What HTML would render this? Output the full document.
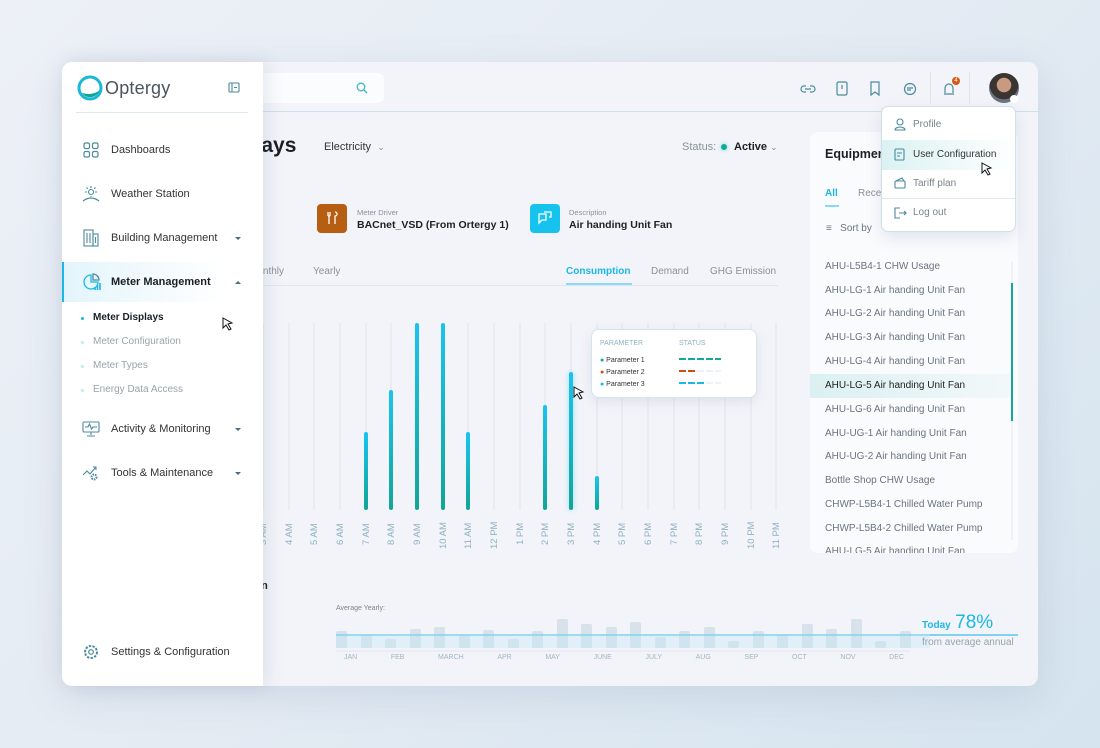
<!DOCTYPE html>
<html><head><meta charset="utf-8"><style>
*{box-sizing:border-box;margin:0;padding:0}
body{width:1100px;height:748px;overflow:hidden;background:linear-gradient(135deg,#edf1f7 0%,#e4ebf3 50%,#d5e4ef 100%);font-family:"Liberation Sans",sans-serif;position:relative;color:#222}
.abs{position:absolute}
.card{left:62px;top:62px;width:976px;height:624px;border-radius:10px;background:#f3f4f9;overflow:hidden;box-shadow:0 10px 40px rgba(80,110,150,.15)}
.side{left:62px;top:62px;width:201px;height:624px;background:#fff;border-radius:10px 0 0 10px;box-shadow:4px 0 18px rgba(60,80,120,.12);z-index:5}
.nav{position:absolute;left:0;width:201px;height:40px;display:flex;align-items:center;font-size:11px;color:#333}
.nav .t{position:absolute;left:49px}
.nav .car{position:absolute;left:173px;width:0;height:0;border-left:3px solid transparent;border-right:3px solid transparent;border-top:3px solid #4a6a80}
.sub{position:absolute;left:31px;font-size:10px;color:#9aa3ad}
.sub:before{content:"";position:absolute;left:-12px;top:5px;width:3px;height:3px;border-radius:50%;background:#bfe9f7}
.xl{position:absolute;font-size:9.5px;color:#8fb2c2;transform:rotate(-90deg);transform-origin:left top;white-space:nowrap}
.li{position:absolute;left:825px;font-size:10px;color:#6b7480}
.bar{position:absolute;width:4px;border-radius:2px;background:linear-gradient(180deg,#18c4f0,#12a596)}
</style></head><body>
<div class="abs card"></div>
<!-- header -->
<div class="abs" style="left:263px;top:62px;width:775px;height:50px;border-bottom:1px solid #cfe0ea"></div>
<div class="abs" style="left:200px;top:73px;width:184px;height:30px;background:#fbfcfe;border-radius:6px"></div>
<svg class="abs" style="left:356px;top:82px" width="12" height="12" viewBox="0 0 12 12"><circle cx="5" cy="5" r="3.8" fill="none" stroke="#39b8c9" stroke-width="1.3"/><path d="M8 8l3 3" stroke="#39b8c9" stroke-width="1.3"/></svg>
<svg class="abs" style="left:800px;top:80px" width="160" height="18" viewBox="0 0 160 18" fill="none" stroke="#4a8a9c" stroke-width="1.2">
<path d="M6 6h-2a3 3 0 0 0 0 6h2M10 6h2a3 3 0 0 1 0 6h-2M5 9h6"/>
<rect x="37" y="2" width="10" height="13" rx="1.5"/><path d="M42 5v4"/>
<path d="M71 2h8v13l-4-3-4 3z"/>
<circle cx="110" cy="9" r="5.5"/><path d="M107 8h6M107 10h4"/>
<path d="M144 14h10M145 13v-5a4 4 0 0 1 8 0v5"/>
</svg>
<div class="abs" style="left:930px;top:72px;width:1px;height:32px;background:#dde6ee"></div>
<div class="abs" style="left:969px;top:72px;width:1px;height:32px;background:#dde6ee"></div>
<div class="abs" style="left:952px;top:77px;width:8px;height:8px;border-radius:50%;background:#d35a10;font-size:6px;color:#fff;text-align:center;line-height:8px">4</div>
<div class="abs" style="left:989px;top:73px;width:30px;height:30px;border-radius:50%;background:radial-gradient(circle at 50% 40%,#c99a82 0 30%,#3a3530 32% 60%,#6a7580 62%)"></div>
<div class="abs" style="left:1010px;top:95px;width:8px;height:8px;border-radius:50%;background:#fff"></div>

<!-- title row -->
<div class="abs" style="left:210px;top:134px;font-size:21px;font-weight:bold;color:#1b1f24">Displays</div>
<div class="abs" style="left:324px;top:141px;font-size:11px;color:#333">Electricity &nbsp;<span style="color:#888;font-size:9px">⌄</span></div>
<div class="abs" style="left:682px;top:141px;font-size:11px;color:#8a9199">Status:</div>
<div class="abs" style="left:721px;top:144px;width:6px;height:6px;border-radius:50%;background:#14a89a;box-shadow:0 0 5px #6ddbd0"></div>
<div class="abs" style="left:734px;top:141px;font-size:11px;font-weight:bold;color:#1b1f24">Active <span style="color:#888;font-weight:normal;font-size:9px">⌄</span></div>

<!-- info row -->
<div class="abs" style="left:210px;top:218px;font-size:11px;font-weight:bold">10:22 PM</div>
<div class="abs" style="left:317px;top:204px;width:30px;height:29px;border-radius:4px;background:#b65f12"></div>
<svg class="abs" style="left:325px;top:211px" width="14" height="14" viewBox="0 0 14 14" fill="none" stroke="#fff" stroke-width="1.3"><path d="M3 1v4M5 1v4M3 5h2M4 5v8M10 1a2 2 0 0 1 0 4v8"/></svg>
<div class="abs" style="left:357px;top:208px;font-size:7.5px;color:#8a9199">Meter Driver</div>
<div class="abs" style="left:357px;top:219px;font-size:10.5px;font-weight:bold">BACnet_VSD (From Ortergy 1)</div>
<div class="abs" style="left:530px;top:204px;width:30px;height:29px;border-radius:4px;background:#16c2ee"></div>
<svg class="abs" style="left:537px;top:211px" width="16" height="14" viewBox="0 0 16 14" fill="none" stroke="#fff" stroke-width="1.3"><path d="M2 3h7v6H5l-3 3zM7 1h7v5h-2"/></svg>
<div class="abs" style="left:569px;top:208px;font-size:7.5px;color:#8a9199">Description</div>
<div class="abs" style="left:569px;top:219px;font-size:10.5px;font-weight:bold">Air handing Unit Fan</div>

<!-- tabs -->
<div class="abs" style="left:200px;top:266px;width:578px;height:20px;border-bottom:1px solid #dfe8f0"></div>
<div class="abs" style="left:249px;top:266px;font-size:10px;color:#8a9199">Monthly</div>
<div class="abs" style="left:313px;top:266px;font-size:10px;color:#8a9199">Yearly</div>
<div class="abs" style="left:566px;top:266px;font-size:10px;font-weight:bold;color:#1bb8e6">Consumption</div>
<div class="abs" style="left:566px;top:283px;width:66px;height:2px;background:#8dd9f2"></div>
<div class="abs" style="left:651px;top:266px;font-size:10px;color:#8a9199">Demand</div>
<div class="abs" style="left:710px;top:266px;font-size:10px;color:#8a9199">GHG Emission</div>

<!-- chart -->
<svg class="abs" style="left:250px;top:320px" width="540" height="195" viewBox="250 320 540 195">
<g stroke="#dfe5ee" stroke-width="1">
<path d="M263 323V510M289 323V510M314 323V510M340 323V510M366 323V510M391 323V510M417 323V510M443 323V510M468 323V510M494 323V510M520 323V510M545 323V510M571 323V510M597 323V510M622 323V510M648 323V510M674 323V510M699 323V510M725 323V510M751 323V510M776 323V510"/>
</g>
</svg>
<div class="bar" style="left:364px;top:432px;height:78px"></div>
<div class="bar" style="left:389px;top:390px;height:120px"></div>
<div class="bar" style="left:415px;top:323px;height:187px"></div>
<div class="bar" style="left:441px;top:323px;height:187px"></div>
<div class="bar" style="left:466px;top:432px;height:78px"></div>
<div class="bar" style="left:543px;top:405px;height:105px"></div>
<div class="bar" style="left:569px;top:372px;height:138px;box-shadow:0 0 6px #8fdcf6"></div>
<div class="bar" style="left:595px;top:476px;height:34px"></div>
<div class="xl" style="left:258px;top:545px">3 AM</div><div class="xl" style="left:284px;top:545px">4 AM</div><div class="xl" style="left:309px;top:545px">5 AM</div><div class="xl" style="left:335px;top:545px">6 AM</div><div class="xl" style="left:361px;top:545px">7 AM</div><div class="xl" style="left:386px;top:545px">8 AM</div><div class="xl" style="left:412px;top:545px">9 AM</div><div class="xl" style="left:438px;top:549px">10 AM</div><div class="xl" style="left:463px;top:549px">11 AM</div><div class="xl" style="left:489px;top:549px">12 PM</div><div class="xl" style="left:515px;top:545px">1 PM</div><div class="xl" style="left:540px;top:545px">2 PM</div><div class="xl" style="left:566px;top:545px">3 PM</div><div class="xl" style="left:592px;top:545px">4 PM</div><div class="xl" style="left:617px;top:545px">5 PM</div><div class="xl" style="left:643px;top:545px">6 PM</div><div class="xl" style="left:669px;top:545px">7 PM</div><div class="xl" style="left:694px;top:545px">8 PM</div><div class="xl" style="left:720px;top:545px">9 PM</div><div class="xl" style="left:746px;top:549px">10 PM</div><div class="xl" style="left:771px;top:549px">11 PM</div>

<!-- tooltip -->
<div class="abs" style="left:591px;top:329px;width:166px;height:69px;background:#fff;border:1px solid #d6e3ec;border-radius:8px;box-shadow:0 4px 12px rgba(80,110,150,.12)"></div>
<div class="abs" style="left:600px;top:340px;font-size:7px;color:#8fb2c2">PARAMETER</div>
<div class="abs" style="left:679px;top:340px;font-size:7px;color:#8fb2c2">STATUS</div>
<div class="abs" style="left:600px;top:355px;font-size:7px;color:#333;line-height:12px"><span style="color:#14a89a">●</span> Parameter 1<br><span style="color:#c9500f">●</span> Parameter 2<br><span style="color:#1bb8e6">●</span> Parameter 3</div>
<svg class="abs" style="left:679px;top:356px" width="42" height="30"><g stroke-width="2" stroke-dasharray="7 2"><path d="M0 3h42" stroke="#14a89a"/><path d="M0 15h42" stroke="#eef1f6"/><path d="M0 15h16" stroke="#c9500f"/><path d="M0 27h42" stroke="#eef1f6"/><path d="M0 27h25" stroke="#1bb8e6"/></g></svg>
<svg class="abs" style="left:573px;top:386px" width="12" height="14" viewBox="0 0 12 14"><path d="M1 1l9 5-4 1 3 5-2 1-3-5-3 3z" fill="#fff" stroke="#111" stroke-width="1"/></svg>

<!-- equipment panel -->
<div class="abs" style="left:810px;top:132px;width:208px;height:421px;background:#fafbfd;border-radius:8px"></div>
<div class="abs" style="left:825px;top:147px;font-size:12.5px;font-weight:bold;color:#1b1f24">Equipment</div>
<div class="abs" style="left:825px;top:188px;font-size:10px;font-weight:bold;color:#1bb8e6">All</div>
<div class="abs" style="left:858px;top:188px;font-size:10px;color:#8a9199">Recent</div>
<div class="abs" style="left:825px;top:205px;width:14px;height:2px;background:#8dd9f2"></div>
<div class="abs" style="left:826px;top:223px;font-size:10px;color:#6b7480">≡ &nbsp; Sort by</div>
<div class="abs" style="left:810px;top:374px;width:200px;height:24px;background:linear-gradient(90deg,#dbf0f2,#f2f8fa)"></div>
<div class="abs" style="left:1011px;top:262px;width:2px;height:278px;background:#eef1f6"></div>
<div class="abs" style="left:1011px;top:283px;width:2px;height:138px;background:#14a89a"></div>
<div class="li" style="top:261px">AHU-L5B4-1 CHW Usage</div>
<div class="li" style="top:285px">AHU-LG-1 Air handing Unit Fan</div>
<div class="li" style="top:308px">AHU-LG-2 Air handing Unit Fan</div>
<div class="li" style="top:332px">AHU-LG-3 Air handing Unit Fan</div>
<div class="li" style="top:356px">AHU-LG-4 Air handing Unit Fan</div>
<div class="li" style="top:380px;color:#222">AHU-LG-5 Air handing Unit Fan</div>
<div class="li" style="top:404px">AHU-LG-6 Air handing Unit Fan</div>
<div class="li" style="top:428px">AHU-UG-1 Air handing Unit Fan</div>
<div class="li" style="top:451px">AHU-UG-2 Air handing Unit Fan</div>
<div class="li" style="top:475px">Bottle Shop CHW Usage</div>
<div class="li" style="top:499px">CHWP-L5B4-1 Chilled Water Pump</div>
<div class="li" style="top:523px">CHWP-L5B4-2 Chilled Water Pump</div>
<div class="abs" style="left:810px;top:546px;width:208px;height:7px;overflow:hidden"><div class="li" style="left:15px;top:0">AHU-LG-5 Air handing Unit Fan</div></div>

<!-- dropdown -->
<div class="abs" style="left:881px;top:106px;width:135px;height:126px;background:#fff;border:1px solid #cfe0ea;border-radius:7px;box-shadow:0 6px 16px rgba(80,110,150,.15);overflow:hidden;z-index:3">
<div class="abs" style="left:0;top:33px;width:135px;height:30px;background:linear-gradient(90deg,#dbf2f2,#fff)"></div>
<div class="abs" style="left:0;top:91px;width:135px;height:1px;background:#e3ebf2"></div>
<svg class="abs" style="left:11px;top:10px" width="14" height="110" viewBox="0 0 14 110" fill="none" stroke="#4a8a9c" stroke-width="1.1"><circle cx="7" cy="5" r="3"/><path d="M2 13a5 3 0 0 1 10 0z"/><rect x="2" y="32" width="9" height="11" rx="1"/><path d="M4 36h5M4 39h3"/><rect x="2" y="64" width="10" height="7" rx="1"/><path d="M3 64l6-3 2 3"/><path d="M7 91h-5v10h5M6 96h7M11 94l2 2-2 2"/></svg>
<div class="abs" style="left:31px;top:12px;font-size:10px;color:#7b838c">Profile</div>
<div class="abs" style="left:31px;top:42px;font-size:10px;color:#333">User Configuration</div>
<div class="abs" style="left:31px;top:71px;font-size:10px;color:#7b838c">Tariff plan</div>
<div class="abs" style="left:31px;top:100px;font-size:10px;color:#7b838c">Log out</div>
</div>
<svg class="abs" style="left:981px;top:162px;z-index:4" width="12" height="14" viewBox="0 0 12 14"><path d="M1 1l9 5-4 1 3 5-2 1-3-5-3 3z" fill="#fff" stroke="#111" stroke-width="1"/></svg>

<!-- bottom -->
<div class="abs" style="left:197px;top:580px;font-size:11px;font-weight:bold">Consumption</div>
<div class="abs" style="left:240px;top:638px;font-size:10px;color:#9aa3ad">kWh</div>
<div class="abs" style="left:336px;top:605px;font-size:7px;color:#7b838c">Average Yearly:</div>
<svg class="abs" style="left:330px;top:615px" width="600" height="40" viewBox="330 615 600 40">
<g fill="#d7e2ea">
<rect x="336" y="631" width="11" height="17" rx="2"/><rect x="361" y="635" width="11" height="13" rx="2"/><rect x="385" y="639" width="11" height="9" rx="2"/><rect x="410" y="629" width="11" height="19" rx="2"/><rect x="434" y="627" width="11" height="21" rx="2"/><rect x="459" y="635" width="11" height="13" rx="2"/><rect x="483" y="630" width="11" height="18" rx="2"/><rect x="508" y="639" width="11" height="9" rx="2"/><rect x="532" y="631" width="11" height="17" rx="2"/><rect x="557" y="619" width="11" height="29" rx="2"/><rect x="581" y="624" width="11" height="24" rx="2"/><rect x="606" y="627" width="11" height="21" rx="2"/><rect x="630" y="622" width="11" height="26" rx="2"/><rect x="655" y="637" width="11" height="11" rx="2"/><rect x="679" y="631" width="11" height="17" rx="2"/><rect x="704" y="627" width="11" height="21" rx="2"/><rect x="728" y="641" width="11" height="7" rx="2"/><rect x="753" y="631" width="11" height="17" rx="2"/><rect x="777" y="635" width="11" height="13" rx="2"/><rect x="802" y="624" width="11" height="24" rx="2"/><rect x="826" y="629" width="11" height="19" rx="2"/><rect x="851" y="619" width="11" height="29" rx="2"/><rect x="875" y="641" width="11" height="7" rx="2"/><rect x="900" y="631" width="11" height="17" rx="2"/>
</g>
<rect x="336" y="636" width="594" height="12" fill="#bfe9f7" opacity=".35"/>
<path d="M336 635H930" stroke="#7fd3f0" stroke-width="1.5"/>
<path d="M336 651H910" stroke="#e0e8ef" stroke-width="1"/>
</svg>
<div class="abs" style="left:930px;top:634px;width:88px;height:1.5px;background:#7fd3f0"></div>
<div class="abs" style="left:336px;top:654px;width:575px;font-size:7px;color:#9fb6c4;display:flex;justify-content:space-between;padding:0 7px 0 8px"><span>JAN</span><span>FEB</span><span>MARCH</span><span>APR</span><span>MAY</span><span>JUNE</span><span>JULY</span><span>AUG</span><span>SEP</span><span>OCT</span><span>NOV</span><span>DEC</span></div>
<div class="abs" style="left:922px;top:612px;color:#1bb8e6"><span style="font-size:10px;font-weight:bold">Today</span> <span style="font-size:19px">78%</span></div>
<div class="abs" style="left:922px;top:637px;font-size:10px;color:#9aa3ad">from average annual</div>

<!-- sidebar -->
<div class="abs side">
<svg class="abs" style="left:15px;top:13px" width="26" height="26" viewBox="0 0 26 26"><circle cx="13" cy="13" r="11" fill="none" stroke="#18b8d8" stroke-width="3"/><path d="M5 18c4 6 14 6 18-3-5 4-11 5-18 3z" fill="#12a596"/></svg>
<div class="abs" style="left:43px;top:16px;font-size:18px;color:#4a5560;letter-spacing:.2px">Optergy</div>
<svg class="abs" style="left:166px;top:20px" width="12" height="11" viewBox="0 0 12 11" fill="none" stroke="#4a8a9c" stroke-width="1.1"><rect x="1" y="1" width="10" height="9" rx="1"/><path d="M4 1v9M6 5.5h3"/></svg>
<div class="abs" style="left:14px;top:50px;width:172px;height:1px;background:#dfe7ee"></div>

<div class="nav" style="top:68px"><svg class="abs" style="left:21px" width="16" height="16" viewBox="0 0 16 16" fill="none" stroke="#4a8a9c" stroke-width="1.2"><rect x="1" y="1" width="5.5" height="5.5" rx="1.5"/><rect x="9.5" y="1" width="5.5" height="5.5" rx="1.5"/><rect x="1" y="9.5" width="5.5" height="5.5" rx="1.5"/><rect x="9.5" y="9.5" width="5.5" height="5.5" rx="1.5"/></svg><span class="t">Dashboards</span></div>
<div class="nav" style="top:112px"><svg class="abs" style="left:20px" width="18" height="18" viewBox="0 0 18 18" fill="none" stroke="#4a8a9c" stroke-width="1.1"><circle cx="9" cy="7" r="2.5"/><path d="M9 1v2M9 11v1M3 7h2M13 7h2M4.5 2.5l1.3 1.3M13.5 2.5l-1.3 1.3M1 16q8-6 16 0"/></svg><span class="t">Weather Station</span></div>
<div class="nav" style="top:156px"><svg class="abs" style="left:21px" width="16" height="18" viewBox="0 0 16 18" fill="none" stroke="#4a8a9c" stroke-width="1.1"><rect x="1" y="1" width="9" height="16"/><rect x="10" y="5" width="5" height="12"/><path d="M4 4v10M7 4v10M12.5 8v6"/></svg><span class="t">Building Management</span><span class="car"></span></div>
<div class="nav" style="top:200px;background:linear-gradient(90deg,#e3f5fb,#fff 80%);border-left:2px solid #1bb8e6"><svg class="abs" style="left:19px" width="18" height="18" viewBox="0 0 18 18" fill="none" stroke="#1bb8e6" stroke-width="1.3"><path d="M8 2a7 7 0 1 0 7 7H8z"/><path d="M10 1a6 6 0 0 1 6 6h-6z" stroke="#4a8a9c"/><path d="M12 17v-3M14.5 17v-5M17 17v-7" stroke="#1bb8e6" stroke-width="1.6"/></svg><span class="t" style="left:47px;font-weight:bold;color:#1b1f24">Meter Management</span><span class="car" style="border-top:0;border-bottom:3px solid #4a6a80;left:171px"></span></div>
<div class="sub" style="top:250px;color:#1b1f24;font-weight:bold">Meter Displays</div>
<div class="abs" style="left:19px;top:255px;width:3px;height:3px;border-radius:50%;background:#1bb8e6"></div>
<div class="sub" style="top:274px">Meter Configuration</div>
<div class="sub" style="top:298px">Meter Types</div>
<div class="sub" style="top:322px">Energy Data Access</div>
<svg class="abs" style="left:160px;top:255px" width="12" height="14" viewBox="0 0 12 14"><path d="M1 1l9 5-4 1 3 5-2 1-3-5-3 3z" fill="#fff" stroke="#111" stroke-width="1"/></svg>
<div class="nav" style="top:347px"><svg class="abs" style="left:20px" width="18" height="16" viewBox="0 0 18 16" fill="none" stroke="#4a8a9c" stroke-width="1.1"><rect x="1" y="1" width="16" height="10" rx="1"/><path d="M3 6h3l1.5-3 2 5 1.5-2h4M9 11v3M5 15h8"/></svg><span class="t">Activity &amp; Monitoring</span><span class="car"></span></div>
<div class="nav" style="top:391px"><svg class="abs" style="left:20px" width="18" height="18" viewBox="0 0 18 18" fill="none" stroke="#4a8a9c" stroke-width="1.1"><path d="M1 11l4-4 3 3 6-7M11 3h3v3"/><circle cx="12" cy="13" r="2.5" stroke-width="2" stroke-dasharray="1.5 1"/></svg><span class="t">Tools &amp; Maintenance</span><span class="car"></span></div>
<div class="nav" style="top:570px"><svg class="abs" style="left:21px" width="16" height="16" viewBox="0 0 16 16" fill="none" stroke="#4a8a9c" stroke-width="1.2"><circle cx="8" cy="8" r="2.3"/><circle cx="8" cy="8" r="6" stroke-dasharray="2.4 1.3" stroke-width="2"/></svg><span class="t">Settings &amp; Configuration</span></div>
</div>
</body></html>
